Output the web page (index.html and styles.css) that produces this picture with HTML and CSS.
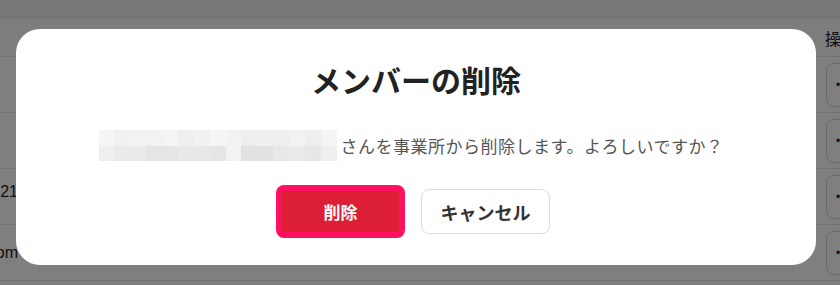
FILE: index.html
```html
<!DOCTYPE html>
<html lang="ja">
<head>
<meta charset="utf-8">
<title>メンバーの削除</title>
<link rel="stylesheet" href="styles.css">
</head>
<body>
<div class="page">
  <div class="topbar"></div>
  <div class="table">
    <div class="row head">
      <div class="cell first"></div>
      <div class="cell ops">操作</div>
    </div>
    <div class="row">
      <div class="cell first"></div>
      <div class="cell ops"><button class="more">•••</button></div>
    </div>
    <div class="row">
      <div class="cell first"></div>
      <div class="cell ops"><button class="more">•••</button></div>
    </div>
    <div class="row">
      <div class="cell first up"><span>090-1234-5621</span></div>
      <div class="cell ops"><button class="more">•••</button></div>
    </div>
    <div class="row">
      <div class="cell first"><span>tanaka@example.com</span></div>
      <div class="cell ops"><button class="more">•••</button></div>
    </div>
  </div>
</div>

<div class="overlay">
  <div class="modal" role="dialog" aria-labelledby="ttl">
    <h2 class="title" id="ttl">メンバーの削除</h2>
    <div class="message">
      <div class="name-mask" aria-hidden="true">
        <i class="a"></i><i class="b"></i><i class="c1"></i><i class="c1"></i><i class="a2"></i><i class="d"></i><i class="b"></i><i class="a"></i><i class="c1"></i><i class="d"></i><i class="d2"></i><i class="d"></i><i class="c1"></i><i class="d"></i><i class="a2"></i>
        <i class="e"></i><i class="f"></i><i class="f"></i><i class="g"></i><i class="g"></i><i class="f2"></i><i class="f2"></i><i class="g"></i><i class="c1"></i><i class="h"></i><i class="h"></i><i class="f2"></i><i class="f"></i><i class="g2"></i><i class="e"></i>
      </div>
      <span class="msg-text">さんを事業所から削除します。よろしいですか？</span>
    </div>
    <div class="actions">
      <button class="btn btn-danger">削除</button>
      <button class="btn btn-cancel">キャンセル</button>
    </div>
  </div>
</div>
</body>
</html>
```

FILE: styles.css
```css
* { box-sizing: border-box; }

html, body {
  margin: 0;
  padding: 0;
  width: 840px;
  height: 285px;
  overflow: hidden;
  background: #ffffff;
  font-family: "Noto Sans CJK JP", "Noto Sans", sans-serif;
}

.page {
  width: 840px;
  height: 285px;
}

.topbar {
  height: 19px;
  background: #eeeeee;
}

.table {
  display: flex;
  flex-direction: column;
}

.row {
  display: flex;
  align-items: center;
  height: 56px;
  border-bottom: 1px solid #e2e2e2;
}

.row.head {
  height: 38px;
  background: #fafafa;
}

.cell.first {
  width: 18px;
  flex-shrink: 0;
  display: flex;
  justify-content: flex-end;
  white-space: nowrap;
  font-family: "Liberation Sans", Arial, sans-serif;
  font-size: 16px;
  color: #222222;
}

.cell.first.up {
  padding-bottom: 10px;
}

.cell.ops {
  margin-left: auto;
  width: 15px;
  font-size: 16px;
  color: #222222;
  white-space: nowrap;
  overflow: visible;
}

.more {
  margin-left: 1px;
  width: 48px;
  height: 44px;
  border: 1px solid #d4d4d4;
  border-radius: 8px;
  background: #ffffff;
  color: #222222;
  font-size: 12px;
  text-align: left;
  padding-left: 9px;
  letter-spacing: 1px;
}

.overlay {
  position: fixed;
  inset: 0;
  background: rgba(0, 0, 0, 0.5);
  display: flex;
  align-items: flex-start;
  padding: 29px 0 0 16px;
}

.modal {
  width: 800px;
  height: 236px;
  background: #ffffff;
  border-radius: 24px;
  padding: 28px 0 0;
  display: flex;
  flex-direction: column;
  align-items: center;
}

.title {
  margin: 0;
  font-size: 30px;
  line-height: 45px;
  font-weight: 700;
  color: #222222;
}

.message {
  margin-top: 28px;
  display: flex;
  align-items: center;
  gap: 4px;
  margin-right: 10px;
}

.name-mask {
  width: 238px;
  height: 31px;
  display: grid;
  grid-template-columns: repeat(15, 1fr);
  grid-template-rows: 16px 15px;
}

.name-mask i { display: block; }
.name-mask .a  { background: #f5f5f5; }
.name-mask .a2 { background: #f4f4f4; }
.name-mask .b  { background: #f1f1f1; }
.name-mask .c1 { background: #f2f2f2; }
.name-mask .d  { background: #eeeeee; }
.name-mask .d2 { background: #efefef; }
.name-mask .e  { background: #efefef; }
.name-mask .f  { background: #eaeaea; }
.name-mask .f2 { background: #e8e8e8; }
.name-mask .g  { background: #e5e5e5; }
.name-mask .g2 { background: #e7e7e7; }
.name-mask .h  { background: #e2e2e2; }

.msg-text {
  font-size: 17px;
  line-height: 24px;
  color: #555555;
  letter-spacing: 0.5px;
}

.actions {
  margin-top: 27px;
  display: flex;
  align-items: center;
  gap: 19px;
  margin-right: 3px;
}

.btn {
  font-family: "Noto Sans CJK JP", sans-serif;
  font-weight: 700;
  font-size: 18px;
  cursor: pointer;
}

.btn-danger {
  width: 123px;
  height: 47px;
  border: 3px solid #ff1060;
  border-radius: 5px;
  box-shadow: 0 0 0 3px #ff1060;
  background: #dc1f35;
  color: #ffffff;
  font-size: 17px;
}

.btn-cancel {
  width: 129px;
  height: 45px;
  border: 1px solid #dddddd;
  border-radius: 8px;
  background: #ffffff;
  color: #333333;
}
```
